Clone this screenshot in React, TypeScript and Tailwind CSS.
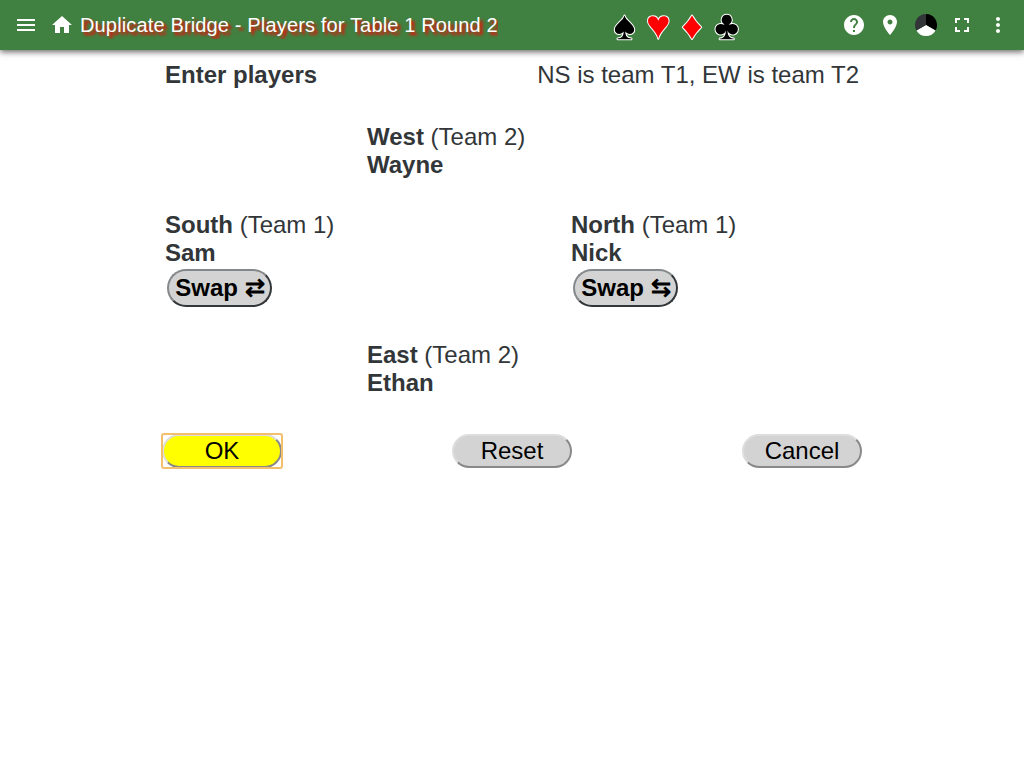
import React from 'react';

const Icon = ({ d }: { d: string }) => (
  <button className="flex h-9 w-9 items-center justify-center text-white">
    <svg viewBox="0 0 24 24" className="h-6 w-6 fill-current"><path d={d} /></svg>
  </button>
);

const Suit = ({ d, red }: { d: string; red?: boolean }) => (
  <svg viewBox="0 0 34 50" className="h-[50px] w-[34px]">
    <path d={d} stroke="#fff" strokeWidth="2" strokeLinejoin="round" className="fill-none" />
    <path d={d} className={red ? 'fill-[#ff0000]' : 'fill-black'} />
  </svg>
);

const Player = ({ seat, team, name }: { seat: string; team: number; name: string }) => (
  <div>
    <div><b>{seat}</b> (Team {team})</div>
    <div className="font-bold">{name}</div>
  </div>
);

const Swap = ({ arrow }: { arrow: string }) => (
  <button className="ml-0.5 mt-0.5 block h-[38px] w-[105px] whitespace-nowrap rounded-[20px] border-2 border-b-[#323639] border-l-[#85888a] border-r-[#323639] border-t-[#85888a] bg-[#d3d3d3] pl-px font-bold leading-[28px] text-black">
    Swap {arrow}
  </button>
);

const Action = ({ label, primary }: { label: string; primary?: boolean }) => (
  <div className={`flex rounded-[2px] ${primary ? 'outline-2 -outline-offset-1 outline-[#f2bf6c]' : ''}`}>
    <button
      className={`h-[34px] w-[120px] rounded-[20px] border-2 border-[#dddddd] leading-[28px] text-black [border-style:outset] ${
        primary ? 'bg-[#ffff00]' : 'bg-[#d3d3d3]'
      }`}
    >
      {label}
    </button>
  </div>
);

export default function App() {
  return (
    <div className="min-h-screen bg-white font-['Liberation_Sans',Arial,sans-serif] text-2xl leading-7 text-[#323639]">
      <header className="flex h-[50px] items-center bg-[#408040] px-2 shadow-[0_2px_6px_rgba(0,0,0,0.6)]">
        <Icon d="M3 18h18v-2H3v2zm0-5h18v-2H3v2zm0-7v2h18V6H3z" />
        <Icon d="M10 20v-6h4v6h5v-8h3L12 3 2 12h3v8z" />
        <h1 className="w-[418px] overflow-hidden whitespace-nowrap text-xl tracking-[0.0075em] text-white [text-shadow:3px_3px_3px_#ff0000]">
          Duplicate Bridge - Players for Table 1 Round 2
        </h1>
        <div className="ml-[110px] flex">
          <Suit d="M16.5 15.4C17.6 20.5 26.2 24.3 26.2 29.6C26.2 34.7 19.8 35.4 17.3 31.6C17.4 36.2 19.3 38.4 23.4 38.6V39.2H9.6V38.6C13.7 38.4 15.6 36.2 15.7 31.6C13.2 35.4 6.8 34.7 6.8 29.6C6.8 24.3 15.4 20.5 16.5 15.4Z" />
          <Suit red d="M16.3 38.7C14.5 30.5 6 26.5 6 21C6 15.1 14.7 14.5 16.3 20.8C17.9 14.5 26.6 15.1 26.6 21C26.6 26.5 18.1 30.5 16.3 38.7Z" />
          <Suit red d="M16 15.5C18.4 19.9 21.7 23.9 25.2 27.2C21.7 30.5 18.4 34.5 16 38.9C13.6 34.5 10.3 30.5 6.8 27.2C10.3 23.9 13.6 19.9 16 15.5Z" />
          <Suit d="M16.7 14.8A5 5 0 0 1 19.7 23.8Q19 24.5 19.1 25Q19.2 25.3 20 24.6A5.3 5.3 0 1 1 17.5 30.5C17.6 35.8 19.6 38.4 23.7 38.6V39.2H9.7V38.6C13.8 38.4 15.8 35.8 15.9 30.5A5.3 5.3 0 1 1 13.4 24.6Q14.2 25.3 14.3 25Q14.4 24.5 13.7 23.8A5 5 0 0 1 16.7 14.8Z" />
        </div>
        <div className="ml-auto flex">
          <Icon d="M12 2C6.48 2 2 6.48 2 12s4.48 10 10 10 10-4.48 10-10S17.52 2 12 2zm1 17h-2v-2h2v2zm2.07-7.75l-.9.92C13.45 12.9 13 13.5 13 15h-2v-.5c0-1.1.45-2.1 1.17-2.83l1.24-1.26c.37-.36.59-.86.59-1.41 0-1.1-.9-2-2-2s-2 .9-2 2H8c0-2.21 1.79-4 4-4s4 1.79 4 4c0 .88-.36 1.68-.93 2.25z" />
          <Icon d="M12 2C8.13 2 5 5.13 5 9c0 5.25 7 13 7 13s7-7.75 7-13c0-3.87-3.13-7-7-7zm0 9.5c-1.38 0-2.5-1.12-2.5-2.5s1.12-2.5 2.5-2.5 2.5 1.12 2.5 2.5-1.12 2.5-2.5 2.5z" />
          <button className="flex h-9 w-9 items-center justify-center">
            <svg viewBox="0 0 24 24" className="h-6 w-6">
              <path d="M12 12V1A11 11 0 0 1 21.53 17.5Z" fill="#000" />
              <path d="M12 12L21.53 17.5A11 11 0 0 1 2.47 17.5Z" fill="#fff" />
              <path d="M12 12L2.47 17.5A11 11 0 0 1 12 1Z" fill="#323639" />
            </svg>
          </button>
          <Icon d="M7 14H5v5h5v-2H7v-3zm-2-4h2V7h3V5H5v5zm12 7h-3v2h5v-5h-2v3zM14 5v2h3v3h2V5h-5z" />
          <Icon d="M12 8c1.1 0 2-.9 2-2s-.9-2-2-2-2 .9-2 2 .9 2 2 2zm0 2c-1.1 0-2 .9-2 2s.9 2 2 2 2-.9 2-2-.9-2-2-2zm0 6c-1.1 0-2 .9-2 2s.9 2 2 2 2-.9 2-2-.9-2-2-2z" />
        </div>
      </header>

      <main className="mx-auto w-[700px] pt-[11px]">
        <div className="flex justify-between px-[3px]">
          <b>Enter players</b>
          <span>NS is team T1, EW is team T2</span>
        </div>
        <section className="pl-[3px] pt-[34px]">
          <div className="pl-[202px]"><Player seat="West" team={2} name="Wayne" /></div>
          <div className="grid grid-cols-[406px_1fr] pt-8">
            <div><Player seat="South" team={1} name="Sam" /><Swap arrow="⇄" /></div>
            <div><Player seat="North" team={1} name="Nick" /><Swap arrow="⇆" /></div>
          </div>
          <div className="pl-[202px] pt-[34px]"><Player seat="East" team={2} name="Ethan" /></div>
        </section>
        <div className="flex justify-between pt-[37px]">
          <Action label="OK" primary />
          <Action label="Reset" />
          <Action label="Cancel" />
        </div>
      </main>
    </div>
  );
}
